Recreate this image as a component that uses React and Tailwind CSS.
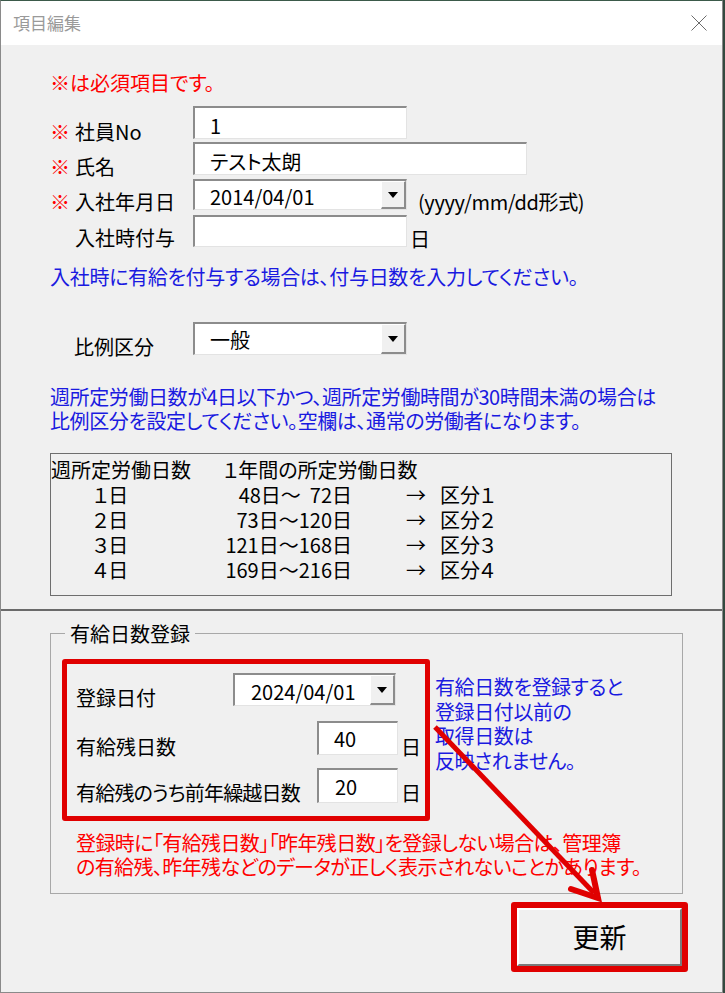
import React from "react";

const jp = "font-['Noto_Sans_CJK_JP','Noto_Sans_CJK_SC',sans-serif] [font-feature-settings:'palt']";
const sunken =
  "bg-white border-t-2 border-l-2 border-r border-b border-t-[#8c8c8c] border-l-[#8c8c8c] border-r-[#e3e3e3] border-b-[#e3e3e3]";

const DropButton = () => (
  <div className="flex items-center justify-center w-[25px] self-stretch bg-[#f0f0f0] border-t border-l border-t-white border-l-white border-r-2 border-b-2 border-r-[#8c8c8c] border-b-[#8c8c8c]">
    <svg width="10" height="6" viewBox="0 0 10 6">
      <path d="M0 0 H10 L5 6 Z" fill="#000" />
    </svg>
  </div>
);

const Mark = () => <span className="w-[25px] text-[#f00]">※</span>;

const tableRows = [
  ["１日", "48日～  72日", "区分１"],
  ["２日", "73日～120日", "区分２"],
  ["３日", "121日～168日", "区分３"],
  ["４日", "169日～216日", "区分４"],
];

export default function App() {
  return (
    <div className={`relative w-[725px] h-[993px] bg-[#34493f] overflow-hidden text-[20px] text-black ${jp}`}>
      <div className="flex flex-col w-[723px] h-[993px] bg-[#f0f0f0] border border-[#8a8a8a] border-t-[#3b5a4a]">
        {/* タイトルバー */}
        <div className="flex items-center justify-between h-[44px] bg-white pl-[12px] pr-[15px]">
          <span className="text-[17px] text-[#9a9a9a]">項目編集</span>
          <svg width="16" height="16" viewBox="0 0 16 16">
            <path d="M0.5 0.5 L15.5 15.5 M15.5 0.5 L0.5 15.5" stroke="#6b6b6b" strokeWidth="1" />
          </svg>
        </div>

        {/* 基本情報 */}
        <div className="flex flex-col pl-[49px] leading-[25px]">
          <p className="mt-[25px] text-[#f00]">※は必須項目です。</p>

          <div className="flex h-[33px] mt-[11px]">
            <div className="flex w-[143px] pt-[13px]">
              <Mark />
              <span>社員No</span>
            </div>
            <div className={`${sunken} flex items-center w-[214px] h-[33px] pl-[15px] pt-[5px]`}>1</div>
          </div>

          <div className="flex h-[33px] mt-[3px]">
            <div className="flex w-[143px] pt-[12px]">
              <Mark />
              <span>氏名</span>
            </div>
            <div className={`${sunken} flex items-center w-[334px] h-[33px] pl-[15px] pt-[5px]`}>テスト太朗</div>
          </div>

          <div className="flex h-[31px] mt-[4px]">
            <div className="flex w-[143px] pt-[10px]">
              <Mark />
              <span>入社年月日</span>
            </div>
            <div className={`${sunken} flex w-[214px] h-[31px]`}>
              <div className="flex items-center flex-1 pl-[15px] pt-[3px]">2014/04/01</div>
              <DropButton />
            </div>
            <span className="ml-[11px] pt-[10px] tracking-[-0.4px]">(yyyy/mm/dd形式)</span>
          </div>

          <div className="flex h-[32px] mt-[5px]">
            <div className="flex w-[143px] pt-[10px] pl-[25px]">入社時付与</div>
            <div className={`${sunken} w-[214px] h-[32px]`} />
            <span className="ml-[3px] pt-[11px]">日</span>
          </div>

          <p className="mt-[17px] text-[#1a1ae0] tracking-[-0.3px]">入社時に有給を付与する場合は、付与日数を入力してください。</p>

          <div className="flex h-[33px] mt-[33px]">
            <div className="flex w-[143px] pt-[12px] pl-[24px]">比例区分</div>
            <div className={`${sunken} flex w-[214px] h-[33px]`}>
              <div className="flex items-center flex-1 pl-[15px]">一般</div>
              <DropButton />
            </div>
          </div>

          <p className="mt-[30px] leading-[24px] text-[#1a1ae0] tracking-[-0.4px]">
            週所定労働日数が4日以下かつ、週所定労働時間が30時間未満の場合は
            <br />
            比例区分を設定してください。空欄は、通常の労働者になります。
          </p>

          <div className="flex flex-col w-[622px] h-[143px] mt-[20px] pt-[3px] border border-[#6e6e6e] whitespace-pre">
            <div className="flex">
              <span className="w-[172px]">週所定労働日数</span>
              <span>１年間の所定労働日数</span>
            </div>
            {tableRows.map(([d, range, k]) => (
              <div key={d} className="flex">
                <span className="w-[42px]" />
                <span className="w-[120px]">{d}</span>
                <span className="w-[139px] text-right">{range}</span>
                <span className="w-[54px]" />
                <span className="w-[34px]">→</span>
                <span>{k}</span>
              </div>
            ))}
          </div>
        </div>

        <div className="h-[2px] mt-[13px] bg-[#6a6a6a]" />

        {/* 有給日数登録 */}
        <fieldset className="w-[633px] ml-[49px] mt-[10px] pb-[14px] border border-[#a8a8a8] leading-[25px]">
          <legend className="ml-[14px] px-[5px]">有給日数登録</legend>

          <div className="flex mt-[13px] ml-[11px]">
            <div className="flex flex-col w-[368px] h-[162px] border-[5px] border-[#e00000] rounded-[3px]">
              <div className="flex h-[33px] mt-[9px]">
                <div className="w-[166px] pl-[9px] pt-[12px]">登録日付</div>
                <div className={`${sunken} flex w-[163px] h-[33px]`}>
                  <div className="flex items-center flex-1 pl-[16px] pt-[2px]">2024/04/01</div>
                  <DropButton />
                </div>
              </div>
              <div className="flex h-[34px] mt-[15px]">
                <div className="w-[250px] pl-[9px] pt-[13px]">有給残日数</div>
                <div className={`${sunken} flex items-center w-[81px] h-[34px] pl-[15px]`}>40</div>
                <span className="ml-[3px] pt-[13px]">日</span>
              </div>
              <div className="flex h-[35px] mt-[13px]">
                <div className="w-[250px] pl-[9px] pt-[12px] tracking-[-0.8px]">有給残のうち前年繰越日数</div>
                <div className={`${sunken} flex items-center w-[81px] h-[35px] pl-[16px]`}>20</div>
                <span className="ml-[3px] pt-[12px]">日</span>
              </div>
            </div>
            <p className="ml-[5px] mt-[16px] leading-[24.5px] text-[#1a1ae0] tracking-[-0.4px]">
              有給日数を登録すると
              <br />
              登録日付以前の
              <br />
              取得日数は
              <br />
              反映されません。
            </p>
          </div>

          <p className="mt-[10px] ml-[25px] leading-[24px] text-[#f00] tracking-[-0.6px]">
            登録時に「有給残日数」「昨年残日数」を登録しない場合は、管理簿
            <br />
            の有給残、昨年残などのデータが正しく表示されないことがあります。
          </p>
        </fieldset>

        {/* 更新ボタン */}
        <div className="self-end mt-[8px] mr-[34px] w-[177px] h-[70px] p-[6px] bg-[#e00000] rounded-[3px]">
          <button className="flex items-center justify-center w-full h-full bg-[#f0f0f0] border-t-2 border-l-2 border-t-white border-l-white border-r-2 border-b-2 border-r-[#7a7a7a] border-b-[#7a7a7a] text-[27px]">
            更新
          </button>
        </div>
      </div>

      {/* 矢印 */}
      <svg className="absolute left-0 top-0 pointer-events-none" width="725" height="993" viewBox="0 0 725 993">
        <line x1="435" y1="727" x2="594" y2="893" stroke="#e00000" strokeWidth="5" />
        <polyline points="571,889 598,898 592,870" fill="none" stroke="#e00000" strokeWidth="6" strokeLinejoin="miter" strokeLinecap="round" />
      </svg>
    </div>
  );
}
